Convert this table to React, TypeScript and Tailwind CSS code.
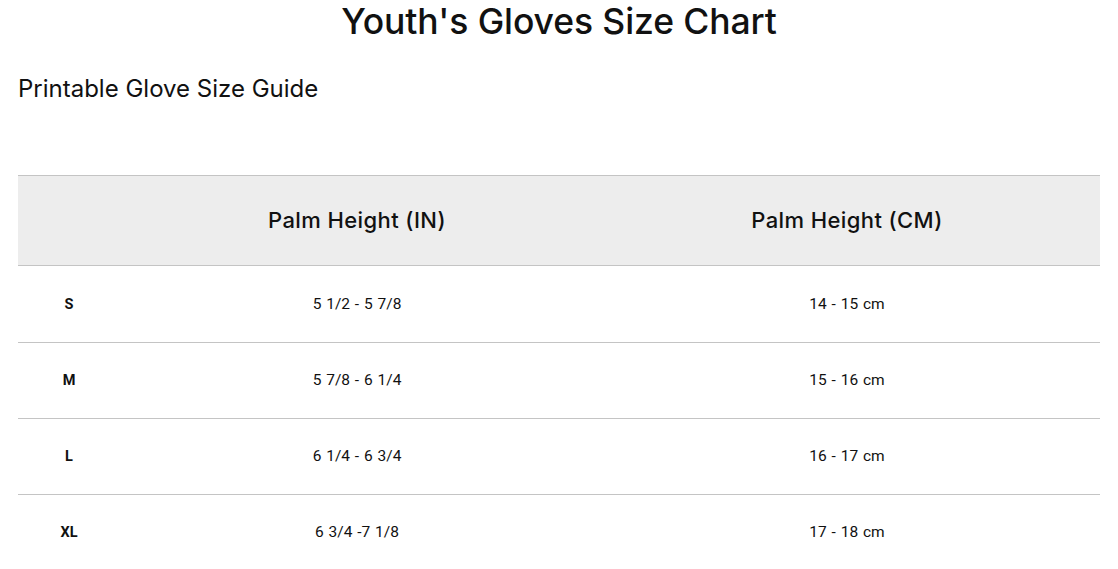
import React from "react";

const rows = [
  ["S", "5 1/2 - 5 7/8", "14 - 15 cm"],
  ["M", "5 7/8 - 6 1/4", "15 - 16 cm"],
  ["L", "6 1/4 - 6 3/4", "16 - 17 cm"],
  ["XL", "6 3/4 -7 1/8", "17 - 18 cm"],
];

export default function App() {
  return (
    <div className="bg-white w-[1118px] h-[569px] overflow-hidden px-[18px] text-[#111]" style={{ fontFamily: "Inter, 'Noto Sans', sans-serif" }}>
      <h1 className="text-center text-[35.5px] font-medium leading-[44px] tracking-[-0.1px]">Youth's Gloves Size Chart</h1>
      <h2 className="text-[24px] font-normal leading-[30px] mt-[30px]">Printable Glove Size Guide</h2>
      <div className="mt-[71px] w-[1082px]">
        <div className="grid grid-cols-[102px_474px_1fr] h-[91px] bg-[#ededed] border-y border-[#c4c4c4] items-center text-[22px] font-medium tracking-[0.4px]">
          <div></div>
          <div className="text-center">Palm Height (IN)</div>
          <div className="text-center">Palm Height (CM)</div>
        </div>
        {rows.map((r, i) => (
          <div
            key={r[0]}
            className={`grid grid-cols-[102px_474px_1fr] ${i === 0 ? "h-[77px] pt-[1px]" : "h-[76px]"} items-center text-[15.5px] ${i < rows.length - 1 ? "border-b border-[#c4c4c4]" : ""}`}
            style={{ fontFamily: "Roboto, Arial, sans-serif", wordSpacing: "1px" }}
          >
            <div className="text-center font-bold text-[14.5px]">{r[0]}</div>
            <div className="text-center">{r[1]}</div>
            <div className="text-center">{r[2]}</div>
          </div>
        ))}
      </div>
    </div>
  );
}
